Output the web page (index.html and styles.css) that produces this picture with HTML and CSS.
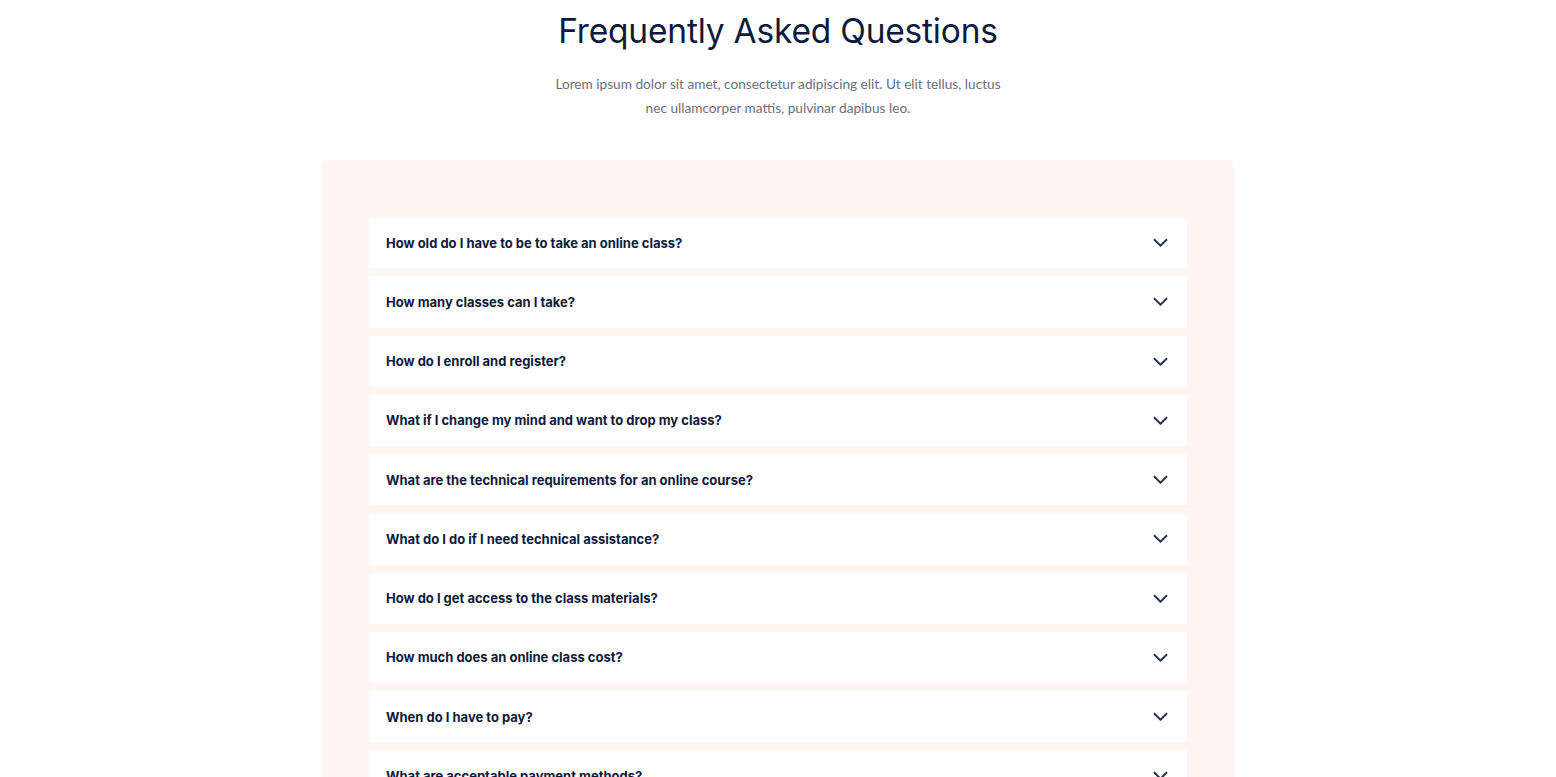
FILE: index.html
```html
<!DOCTYPE html>
<html lang="en">
<head>
<meta charset="utf-8">
<title>FAQ</title>
<link rel="stylesheet" href="styles.css">
</head>
<body>
<section class="faq">
  <h1 class="faq-title">Frequently Asked Questions</h1>
  <p class="faq-lead">Lorem ipsum dolor sit amet, consectetur adipiscing elit. Ut elit tellus, luctus<br>nec ullamcorper mattis, pulvinar dapibus leo.</p>
  <div class="faq-card">
    <ul class="faq-list">
      <li class="faq-item"><span>How old do I have to be to take an online class?</span><svg class="chev" viewBox="0 0 16 9"><path d="M1 1l7 7 7-7"/></svg></li>
      <li class="faq-item"><span>How many classes can I take?</span><svg class="chev" viewBox="0 0 16 9"><path d="M1 1l7 7 7-7"/></svg></li>
      <li class="faq-item"><span>How do I enroll and register?</span><svg class="chev" viewBox="0 0 16 9"><path d="M1 1l7 7 7-7"/></svg></li>
      <li class="faq-item"><span>What if I change my mind and want to drop my class?</span><svg class="chev" viewBox="0 0 16 9"><path d="M1 1l7 7 7-7"/></svg></li>
      <li class="faq-item"><span>What are the technical requirements for an online course?</span><svg class="chev" viewBox="0 0 16 9"><path d="M1 1l7 7 7-7"/></svg></li>
      <li class="faq-item"><span>What do I do if I need technical assistance?</span><svg class="chev" viewBox="0 0 16 9"><path d="M1 1l7 7 7-7"/></svg></li>
      <li class="faq-item"><span>How do I get access to the class materials?</span><svg class="chev" viewBox="0 0 16 9"><path d="M1 1l7 7 7-7"/></svg></li>
      <li class="faq-item"><span>How much does an online class cost?</span><svg class="chev" viewBox="0 0 16 9"><path d="M1 1l7 7 7-7"/></svg></li>
      <li class="faq-item"><span>When do I have to pay?</span><svg class="chev" viewBox="0 0 16 9"><path d="M1 1l7 7 7-7"/></svg></li>
      <li class="faq-item"><span>What are acceptable payment methods?</span><svg class="chev" viewBox="0 0 16 9"><path d="M1 1l7 7 7-7"/></svg></li>
      <li class="faq-item"><span>Do you offer refunds?</span><svg class="chev" viewBox="0 0 16 9"><path d="M1 1l7 7 7-7"/></svg></li>
    </ul>
  </div>
</section>
</body>
</html>
```

FILE: styles.css
```css
* { box-sizing: border-box; }
html, body { margin: 0; padding: 0; background: #ffffff; }
body { font-family: "Inter", "Noto Sans", sans-serif; color: #0d1a3c; }

.faq {
  display: flex;
  flex-direction: column;
  align-items: center;
  padding-top: 10px;
}

.faq-title {
  margin: 0;
  font-family: "Inter", sans-serif;
  font-weight: 400;
  font-size: 33.5px;
  line-height: 42px;
  color: #0d1a3c;
  letter-spacing: -0.2px;
}

.faq-lead {
  margin: 20px 0 0;
  font-family: "Lato", sans-serif;
  font-size: 13.65px;
  line-height: 24px;
  color: #6e6e7e;
  text-align: center;
}

.faq-card {
  margin-top: 40px;
  width: 912px;
  background: #fff6f4;
  border-radius: 5px;
  padding: 57px 47px 40px;
}

.faq-list {
  list-style: none;
  margin: 0;
  padding: 0;
  display: flex;
  flex-direction: column;
  gap: 8px;
}

.faq-item {
  display: flex;
  align-items: center;
  justify-content: space-between;
  height: 51.25px;
  padding: 0 19px 0 17px;
  background: #ffffff;
  font-family: "Inter", sans-serif;
  font-weight: 700;
  font-size: 13px;
  color: #0d1a3c;
}

.chev {
  width: 15px;
  height: 9px;
  fill: none;
  stroke: #26324f;
  stroke-width: 2;
}
```
